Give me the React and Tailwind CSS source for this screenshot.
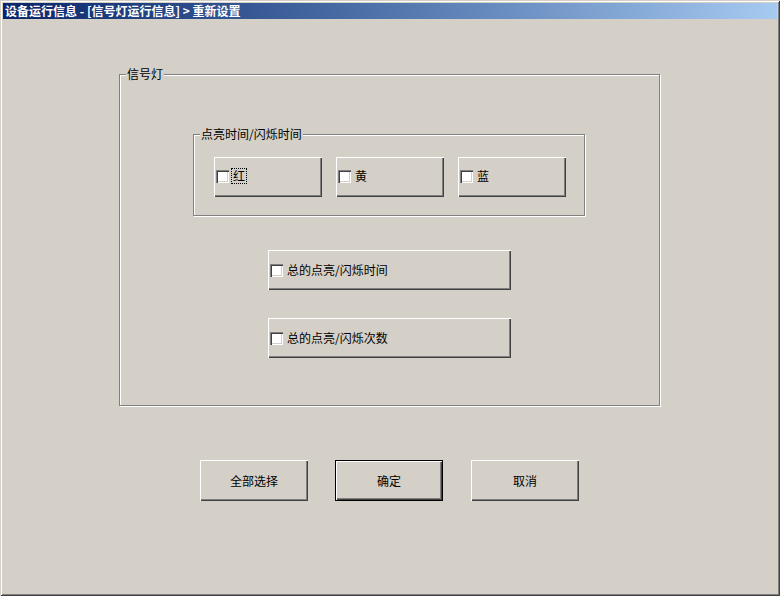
import React from "react";

const font = { fontFamily: '"Noto Sans CJK SC", "Liberation Sans", sans-serif' };

const CheckBox = () => (
  <span className="inline-block w-[13px] h-[13px] bg-white shrink-0 shadow-[inset_1px_1px_0_#808080,inset_2px_2px_0_#404040,inset_-1px_-1px_0_#ffffff,inset_-2px_-2px_0_#d4d0c8]" />
);

const Raised = ({ className = "", children }) => (
  <div
    className={`flex items-center bg-[#d4d0c8] shadow-[inset_1px_1px_0_#ffffff,inset_-1px_-1px_0_#404040,inset_-2px_-2px_0_#808080] ${className}`}
  >
    {children}
  </div>
);

const CheckButton = ({ label, focus, className = "" }) => (
  <Raised className={`pl-[2px] gap-[3px] ${className}`}>
    <CheckBox />
    <span
      className={`text-[12px] leading-[12px] text-black px-[1px] py-[1px] ${
        focus ? "outline outline-1 outline-dotted outline-black" : ""
      }`}
    >
      {label}
    </span>
  </Raised>
);

const GroupBox = ({ title, className = "", children }) => (
  <div
    className={`relative border border-[#808080] shadow-[inset_1px_1px_0_#ffffff,1px_1px_0_#ffffff] ${className}`}
  >
    <span className="absolute -top-[7px] left-[6px] px-[1px] bg-[#d4d0c8] text-[12px] leading-[12px] text-black">
      {title}
    </span>
    {children}
  </div>
);

const PushButton = ({ label, isDefault, className = "" }) => (
  <div className={`w-[108px] h-[41px] ${isDefault ? "border border-black" : ""} ${className}`}>
    <Raised className="justify-center w-full h-full">
      <span className="text-[12px] leading-[12px] text-black">{label}</span>
    </Raised>
  </div>
);

export default function App() {
  return (
    <div
      style={font}
      className="w-[780px] h-[596px] bg-[#d4d0c8] pt-[3px] px-[3px] flex flex-col shadow-[inset_1px_1px_0_#d4d0c8,inset_-1px_-1px_0_#404040,inset_2px_2px_0_#ffffff,inset_-2px_-2px_0_#808080]"
    >
      <div className="h-[16px] flex items-center pl-[2px] bg-gradient-to-r from-[#0a246a] to-[#a6caf0]">
        <span className="text-white font-bold text-[12px] leading-[12px] whitespace-pre">
          设备运行信息 - [信号灯运行信息] &gt; 重新设置
        </span>
      </div>

      <div className="flex flex-col">
        <GroupBox title="信号灯" className="ml-[116px] mt-[55px] w-[541px] h-[332px]">
          <div className="flex flex-col">
            <GroupBox title="点亮时间/闪烁时间" className="ml-[73px] mt-[59px] w-[392px] h-[82px]">
              <div className="flex gap-[14px] ml-[20px] mt-[22px]">
                <CheckButton label="红" focus className="w-[108px] h-[40px] pb-[2px]" />
                <CheckButton label="黄" className="w-[108px] h-[40px] pb-[2px]" />
                <CheckButton label="蓝" className="w-[108px] h-[40px] pb-[2px]" />
              </div>
            </GroupBox>
            <div className="flex flex-col gap-[28px] ml-[148px] mt-[34px]">
              <CheckButton label="总的点亮/闪烁时间" className="w-[243px] h-[40px]" />
              <CheckButton label="总的点亮/闪烁次数" className="w-[243px] h-[40px]" />
            </div>
          </div>
        </GroupBox>

        <div className="flex ml-[197px] mt-[54px]">
          <PushButton label="全部选择" />
          <PushButton label="确定" isDefault className="ml-[27px]" />
          <PushButton label="取消" className="ml-[28px]" />
        </div>
      </div>
    </div>
  );
}
